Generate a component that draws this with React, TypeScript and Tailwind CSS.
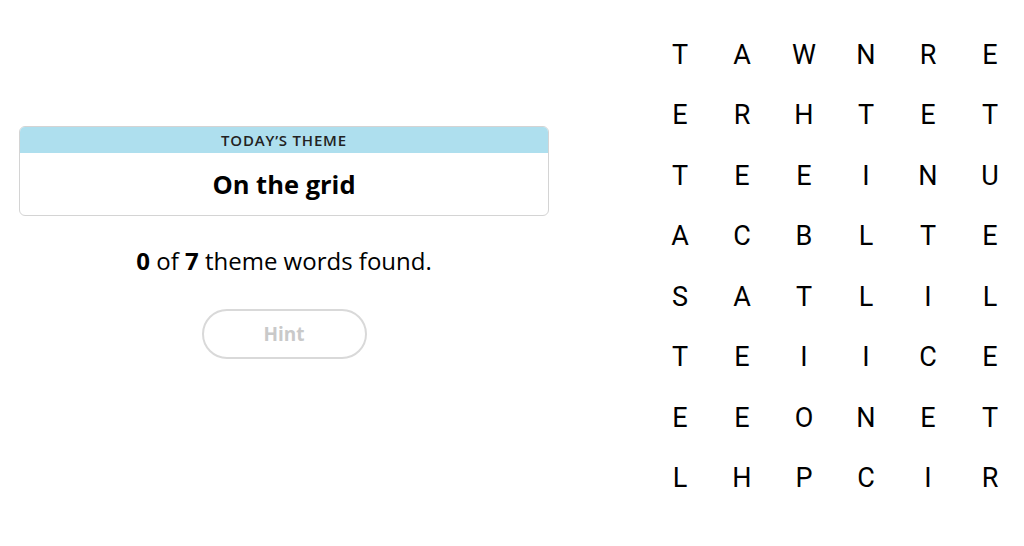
const GRID = [
  "TAWNRE",
  "ERHTET",
  "TEEINU",
  "ACBLTE",
  "SATLIL",
  "TEIICE",
  "EEONET",
  "LHPCIR",
];

export default function App() {
  return (
    <div className="flex h-[546px] w-[1024px] items-start bg-white text-black font-['Open_Sans',sans-serif]">
      <div className="flex w-[568px] flex-col items-center px-[19px] pt-[126px]">
        <div className="w-full overflow-hidden rounded-[6px] border border-[#d4d4d4]">
          <div className="flex h-[26px] items-center justify-center bg-[#aedfee] text-[15px] font-semibold uppercase tracking-[0.8px] text-[#222]">
            Today’s Theme
          </div>
          <div className="flex h-[62px] items-center justify-center text-[25.5px] font-bold">
            On the grid
          </div>
        </div>
        <p className="mt-[30px] text-[24px] leading-[30px]">
          <span className="font-bold">0</span> of <span className="font-bold">7</span> theme words found.
        </p>
        <button className="mt-[33px] h-[50px] w-[165px] rounded-full border-2 border-[#d9d9d9] text-[19px] font-bold text-[#c9c9c9]">
          Hint
        </button>
      </div>
      <div className="ml-[81px] grid grid-cols-6 content-start pt-[25px] font-['Roboto',sans-serif]">
        {GRID.flatMap((row, r) =>
          row.split("").map((ch, c) => (
            <div key={`${r}-${c}`} className="flex h-[60.5px] w-[62px] items-center justify-center text-[27px] leading-none">
              {ch}
            </div>
          ))
        )}
      </div>
    </div>
  );
}
